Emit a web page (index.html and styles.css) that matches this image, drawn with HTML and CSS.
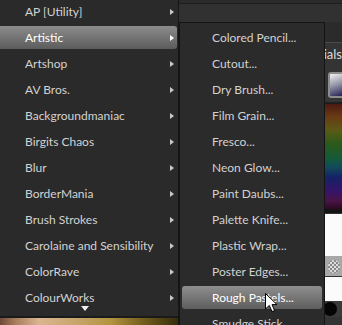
FILE: index.html
```html
<!DOCTYPE html>
<html lang="en">

<head>
    <meta charset="UTF-8">
    <meta name="viewport" content="width=device-width, initial-scale=1.0">
    <title>Filters menu</title>
    <link rel="stylesheet" href="styles.css">
</head>

<body>

    <div class="screen">

        <div class="left">
            <div class="menu-box">
                <ul class="menu">
                    <li class="item">AP [Utility]</li>
                    <li class="item active">Artistic</li>
                    <li class="item">Artshop</li>
                    <li class="item">AV Bros.</li>
                    <li class="item">Backgroundmaniac</li>
                    <li class="item">Birgits Chaos</li>
                    <li class="item">Blur</li>
                    <li class="item">BorderMania</li>
                    <li class="item">Brush Strokes</li>
                    <li class="item">Carolaine and Sensibility</li>
                    <li class="item">ColorRave</li>
                    <li class="item">ColourWorks</li>
                </ul>
                <div class="more"></div>
            </div>
            <div class="strip"></div>
        </div>

        <div class="right">
            <div class="topbar"></div>
            <div class="lower">
                <ul class="submenu">
                    <li class="sub-item">Colored Pencil...</li>
                    <li class="sub-item">Cutout...</li>
                    <li class="sub-item">Dry Brush...</li>
                    <li class="sub-item">Film Grain...</li>
                    <li class="sub-item">Fresco...</li>
                    <li class="sub-item">Neon Glow...</li>
                    <li class="sub-item">Paint Daubs...</li>
                    <li class="sub-item">Palette Knife...</li>
                    <li class="sub-item">Plastic Wrap...</li>
                    <li class="sub-item">Poster Edges...</li>
                    <li class="sub-item active">Rough Pastels...</li>
                    <li class="sub-item">Smudge Stick...</li>
                </ul>

                <div class="panel">
                    <div class="panel-body">
                        <div class="panel-title"><span>Materials</span></div>
                        <div class="thumb"></div>
                        <div class="spectrum"></div>
                        <div class="swatch-white"></div>
                        <div class="swatch-row">
                            <span class="checker"></span>
                        </div>
                        <div class="swatch-white short"></div>
                        <div class="swatch-row dark">
                            <span class="dot"></span>
                        </div>
                    </div>
                </div>
            </div>
        </div>

        <!-- mouse pointer -->
        <svg class="cursor" width="14" height="20" viewBox="0 0 14 20">
            <path d="M0.5 0.5 L0.5 16 L4.3 12.4 L7 18.6 L9.6 17.5 L7 11.6 L12 11.6 Z" fill="#fff" stroke="#000" stroke-width="1" stroke-linejoin="round" />
        </svg>

    </div>

</body>

</html>
```

FILE: styles.css
```css
body {
    margin: 0;
    padding: 0;
    background: #2b2b2b;
    font-family: 'Lato', 'Noto Sans', sans-serif;
    font-size: 12px;
}

.screen {
    display: flex;
    width: 342px;
    height: 325px;
    overflow: hidden;
    position: relative;
}

/* main menu */
.left {
    width: 178px;
    border-right: 1px solid #161616;
    display: flex;
    flex-direction: column;
    flex-shrink: 0;
}

.menu-box {
    height: 316px;
    flex-shrink: 0;
    background: #2a2a2a;
}

.menu {
    list-style: none;
    margin: 0;
    padding: 0;
}

.item {
    display: flex;
    justify-content: space-between;
    align-items: center;
    height: 23px;
    margin: 0 1px 3px 0;
    padding: 0 3px 0 25px;
    color: #d2d2d2;
    border-radius: 0 3px 3px 0;
}

.item::after {
    content: '';
    border-left: 4px solid #c9c9c9;
    border-top: 3.5px solid transparent;
    border-bottom: 3.5px solid transparent;
}

.item.active {
    background: linear-gradient(#8c8c8c, #5c5c5c);
    color: #fff;
}

.item.active::after {
    border-left-color: #fff;
}

.more {
    height: 5px;
    margin-top: -6px;
    padding-left: 81px;
}

.more::before {
    content: '';
    display: block;
    width: 0;
    border-top: 5px solid #eee;
    border-left: 4.5px solid transparent;
    border-right: 4.5px solid transparent;
}

.strip {
    flex: 1;
    border-top: 2px solid #1a1a1a;
    background: linear-gradient(90deg, #6e4a38 0%, #a97e5e 9%, #dab690 22%, #c9a56e 42%, #b3943f 62%, #6e5a1c 82%, #352c0c 100%);
}

/* right side */
.right {
    flex: 1;
    min-width: 0;
    display: flex;
    flex-direction: column;
}

.topbar {
    flex-shrink: 0;
    height: 18px;
    margin-top: 3px;
    border-top: 1px solid #1c1c1c;
    background: #313131;
}

.lower {
    flex: 1;
    min-width: 0;
    min-height: 0;
    display: flex;
}

.submenu {
    list-style: none;
    margin: 0;
    box-sizing: border-box;
    width: 146px;
    flex-shrink: 0;
    padding: 3px 2px 0 2px;
    background: #2b2b2b;
    border: 1px solid #141414;
    border-bottom: none;
    overflow: hidden;
}

.sub-item {
    display: flex;
    align-items: center;
    height: 23px;
    margin-bottom: 3px;
    padding-left: 30px;
    color: #d2d2d2;
    border-radius: 3px;
    white-space: nowrap;
}

.sub-item.active {
    background: linear-gradient(#8e8e8e, #5e5e5e);
    color: #fff;
}

/* docked palette peeking out on the right */
.panel {
    flex: 1;
    min-width: 0;
    padding-top: 20px;
    overflow: hidden;
}

.panel-body {
    height: 100%;
    border-top: 1px solid #4a4a4a;
    background: #343434;
    display: flex;
    flex-direction: column;
}

.panel-title {
    flex-shrink: 0;
    display: flex;
    justify-content: flex-end;
    white-space: nowrap;
    height: 24px;
    line-height: 22px;
    font-size: 13px;
    color: #dcdcdc;
}

.panel-title span {
    flex-shrink: 0;
}

.thumb {
    flex-shrink: 0;
    height: 22px;
    margin: 5px -4px 0 3px;
    border: 2px solid #8d8d8d;
    border-radius: 3px;
    background: linear-gradient(160deg, #f2f2f2, #9a9aac 45%, #1c1c4e);
}

.spectrum {
    flex-shrink: 0;
    height: 105px;
    margin-top: 4px;
    border-top: 2px solid #1e1e1e;
    border-bottom: 4px solid #141414;
    background: linear-gradient(#4a1a12, #6a3a14 12%, #5a5a16 25%, #2a5a1a 38%, #145a3a 52%, #124a5a 60%, #142266 70%, #34146a 82%, #4a1448 92%, #2a0a22);
}

.swatch-white {
    flex-shrink: 0;
    height: 42px;
    margin-top: 1px;
    background: #fbfbfb;
}

.swatch-white.short {
    height: 24px;
}

.swatch-row {
    flex-shrink: 0;
    height: 20px;
    display: flex;
    align-items: center;
    padding-left: 3px;
    background: #a8a8a8;
}

.swatch-row.dark {
    height: 16px;
    padding-left: 0;
    background: #3a3a3a;
    margin-left: -2px;
}

.checker {
    width: 12px;
    height: 13px;
    border-radius: 50%;
    background-color: #ddd;
    background-image: linear-gradient(45deg, #888 25%, transparent 25%, transparent 75%, #888 75%), linear-gradient(45deg, #888 25%, transparent 25%, transparent 75%, #888 75%);
    background-size: 4px 4px;
    background-position: 0 0, 2px 2px;
}

.dot {
    width: 14px;
    height: 14px;
    border-radius: 50%;
    background: #050505;
}

.cursor {
    position: absolute;
    left: 265px;
    top: 293px;
}
```
